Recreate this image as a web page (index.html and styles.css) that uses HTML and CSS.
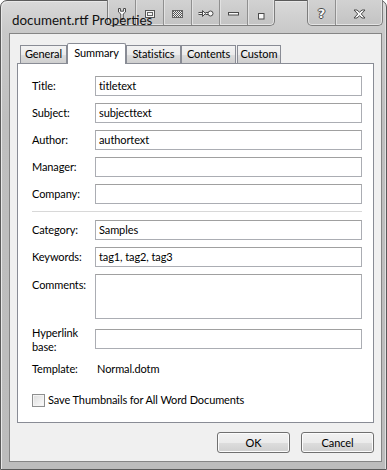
FILE: index.html
```html
<!DOCTYPE html>
<html>
<head>
<meta charset="utf-8">
<link rel="stylesheet" href="styles.css">
</head>
<body>
<div class="window">
  <div class="titlebar">
    <span class="title">document.rtf Properties</span>
    <div class="tb-group g1">
      <div class="tb-btn">
        <svg width="12" height="12" viewBox="0 0 12 12"><path d="M2.5 0.5 L2.5 4 L4.8 6 L4.8 11.5 L7.2 11.5 L7.2 6 L9.5 4 L9.5 0.5 L7.6 0.5 L7.6 3.2 L4.4 3.2 L4.4 0.5 Z" fill="#fbfbfb" stroke="#4a4a4a" stroke-width="1"/></svg>
      </div>
      <div class="tb-btn">
        <svg width="10" height="8" viewBox="0 0 10 8"><rect x="0.5" y="0.5" width="9" height="7" fill="#f4f4f4" stroke="#555"/><rect x="2.5" y="2.5" width="5" height="3" fill="none" stroke="#666"/></svg>
      </div>
      <div class="tb-btn">
        <svg width="11" height="8" viewBox="0 0 11 8">
          <defs><pattern id="hatch" width="2" height="2" patternUnits="userSpaceOnUse"><rect width="2" height="2" fill="#eee"/><rect width="1" height="1" fill="#555"/><rect x="1" y="1" width="1" height="1" fill="#555"/></pattern></defs>
          <rect x="0.5" y="0.5" width="10" height="7" fill="url(#hatch)" stroke="#666"/></svg>
      </div>
      <div class="tb-btn">
        <svg width="16" height="8" viewBox="0 0 16 8"><path d="M0.5 3.5 H5 M7.5 3.5 H10" stroke="#4a4a4a" stroke-width="3"/><path d="M0.5 3.5 H5 M7.5 3.5 H10" stroke="#f6f6f6" stroke-width="1"/><path d="M4.5 0.5 L7.5 3.5 L4.5 6.5 Z" fill="#f6f6f6" stroke="#4a4a4a"/><circle cx="12.5" cy="3.5" r="2.5" fill="#f6f6f6" stroke="#4a4a4a"/></svg>
      </div>
      <div class="tb-btn">
        <svg width="11" height="4" viewBox="0 0 11 4"><rect x="0.5" y="0.5" width="10" height="2.5" fill="#f8f8f8" stroke="#4a4a4a"/></svg>
      </div>
      <div class="tb-btn last">
        <svg width="7" height="7" viewBox="0 0 7 7" class="sq"><rect x="0.5" y="0.5" width="5.5" height="5.5" fill="#f8f8f8" stroke="#4a4a4a"/></svg>
      </div>
    </div>
    <div class="tb-group g2">
      <div class="tb-btn help"><span class="qmark">?</span></div>
      <div class="tb-btn close last">
        <svg width="13" height="10" viewBox="0 0 13 10"><path d="M1 1 H4 L6.5 3.2 L9 1 H12 L8.3 5 L12 9 H9 L6.5 6.8 L4 9 H1 L4.7 5 Z" fill="#f8f8f8" stroke="#4a4a4a" stroke-width="1" stroke-linejoin="round"/></svg>
      </div>
    </div>
  </div>
  <div class="client">
    <div class="tabs">
      <div class="tab w-general">General</div>
      <div class="tab sel w-summary">Summary</div>
      <div class="tab w-stats">Statistics</div>
      <div class="tab w-contents">Contents</div>
      <div class="tab w-custom">Custom</div>
    </div>
    <div class="panel">
      <div class="row"><label class="lbl">Title:</label><div class="field">titletext</div></div>
      <div class="row"><label class="lbl">Subject:</label><div class="field">subjecttext</div></div>
      <div class="row"><label class="lbl">Author:</label><div class="field">authortext</div></div>
      <div class="row"><label class="lbl">Manager:</label><div class="field"></div></div>
      <div class="row"><label class="lbl">Company:</label><div class="field"></div></div>
      <div class="sep"></div>
      <div class="row"><label class="lbl">Category:</label><div class="field">Samples</div></div>
      <div class="row"><label class="lbl">Keywords:</label><div class="field">tag1, tag2, tag3</div></div>
      <div class="row top"><label class="lbl comments-lbl">Comments:</label><div class="field area"></div></div>
      <div class="row top link-row"><label class="lbl two">Hyperlink<br>base:</label><div class="field link-field"></div></div>
      <div class="row tpl"><span class="lbl">Template:</span><span class="value">Normal.dotm</span></div>
      <div class="check-row"><span class="checkbox"></span><span>Save Thumbnails for All Word Documents</span></div>
    </div>
    <div class="buttons">
      <div class="btn">OK</div>
      <div class="btn">Cancel</div>
    </div>
  </div>
</div>
</body>
</html>
```
FILE: styles.css
```css
* { box-sizing: border-box; }
html, body { margin: 0; padding: 0; background: #fff; }
body {
  font-family: "Segoe UI", Lato, "Noto Sans", sans-serif;
  font-size: 11px;
  letter-spacing: -0.1px;
  color: #000;
}
.window {
  width: 387px;
  height: 470px;
  border: 1px solid #5a5a5a;
  border-radius: 7px 7px 0 0;
  background: linear-gradient(#d9d9d9, #c9c9c9 30px, #bfbfbf 120px, #bcbcbc);
  display: flex;
  flex-direction: column;
  box-shadow: inset 1px 1px 0 #e8e8e8, inset -1px 0 0 #e0e0e0;
}
.titlebar {
  position: relative;
  height: 32px;
  flex: none;
}
.title {
  position: absolute;
  left: 11px;
  top: 11px;
  font-size: 13.4px;
  letter-spacing: 0;
  line-height: 16px;
  color: #111;
  z-index: 2;
}
.tb-group {
  position: absolute;
  top: -1px;
  height: 26px;
  display: flex;
  border: 1px solid #7d7d7d;
  border-top: none;
  border-radius: 0 0 5px 5px;
  background: linear-gradient(#d2d2d2, #c3c3c3);
  box-shadow: inset 0 -1px 0 #e4e4e4, inset 1px 0 0 #e4e4e4, inset -1px 0 0 #e4e4e4;
}
.g1 { left: 106px; width: 168px; }
.g2 { left: 306px; width: 76px; }
.tb-btn {
  width: 28px;
  height: 100%;
  display: flex;
  align-items: center;
  justify-content: center;
  border-right: 1px solid #8f8f8f;
  box-shadow: 1px 0 0 #e2e2e2;
  padding-top: 3px;
}
.tb-btn.last { border-right: none; box-shadow: none; flex: 1; }
.tb-btn .sq { margin-top: 4px; }
.help { width: 28px; }
.qmark {
  font-family: "DejaVu Sans", sans-serif;
  font-weight: bold;
  font-size: 13px;
  line-height: 13px;
  color: #f8f8f8;
  text-shadow: 1px 0 0 #4a4a4a, -1px 0 0 #4a4a4a, 0 1px 0 #4a4a4a, 0 -1px 0 #4a4a4a;
  margin-top: -2px;
}
.client {
  flex: 1;
  margin: 0 4px 7px 8px;
  border: 1px solid #858585;
  background: #f0f0f0;
  display: flex;
  flex-direction: column;
}
.tabs {
  display: flex;
  align-items: flex-end;
  height: 21px;
  margin: 8px 0 0 10px;
  position: relative;
  z-index: 1;
}
.tab {
  height: 18px;
  border: 1px solid #898c95;
  border-bottom: none;
  background: linear-gradient(#f3f3f3, #ebebeb 50%, #dddddd 51%, #cfcfcf);
  text-align: center;
  line-height: 16px;
  color: #000;
}
.tab.sel {
  height: 21px;
  background: #fff;
  margin-bottom: -1px;
  border-radius: 2px 2px 0 0;
  line-height: 17px;
}
.w-general { width: 47px; }
.w-summary { width: 59px; }
.w-stats { width: 55px; }
.w-contents { width: 55px; }
.w-custom { margin-left: 1px; width: 44px; }
.panel {
  margin: 0 7px 0 7px;
  height: 360px;
  border: 1px solid #898c95;
  background: #fff;
  padding: 12px 11px 0 14px;
}
.row {
  display: grid;
  grid-template-columns: 63px 1fr;
  align-items: center;
  margin-bottom: 7px;
}
.row.top { align-items: start; }
.lbl { line-height: 14px; }
.field {
  height: 20px;
  border: 1px solid #abadb3;
  border-top-color: #a0a0a0;
  padding: 0 3px;
  line-height: 18px;
  white-space: nowrap;
}
.field.area { height: 45px; }
.comments-lbl { margin-top: 4px; }
.sep {
  height: 1px;
  background: #d8d8d8;
  margin: 1px 0 8px;
}
.link-row { margin-top: 3px; }
.link-field { margin-top: 3px; }
.two { line-height: 14px; }
.tpl { margin-top: 0; margin-bottom: 0; }
.value { margin-left: 2px; line-height: 15px; }
.check-row {
  display: flex;
  align-items: center;
  gap: 3px;
  margin-top: 17px;
  line-height: 14px;
}
.checkbox {
  width: 13px;
  height: 13px;
  border: 1px solid #8e8f8f;
  background: linear-gradient(135deg, #dcdcdc, #fdfdfd);
  box-shadow: inset 0 0 0 1px #f4f4f4;
}
.buttons {
  display: flex;
  justify-content: flex-end;
  gap: 11px;
  margin: 9px 7px 0 0;
}
.btn {
  width: 73px;
  height: 21px;
  border: 1px solid #707070;
  border-radius: 3px;
  background: linear-gradient(#f2f2f2, #ebebeb 50%, #dddddd 51%, #cfcfcf);
  box-shadow: inset 0 0 0 1px #fcfcfc;
  text-align: center;
  line-height: 19px;
}
```
